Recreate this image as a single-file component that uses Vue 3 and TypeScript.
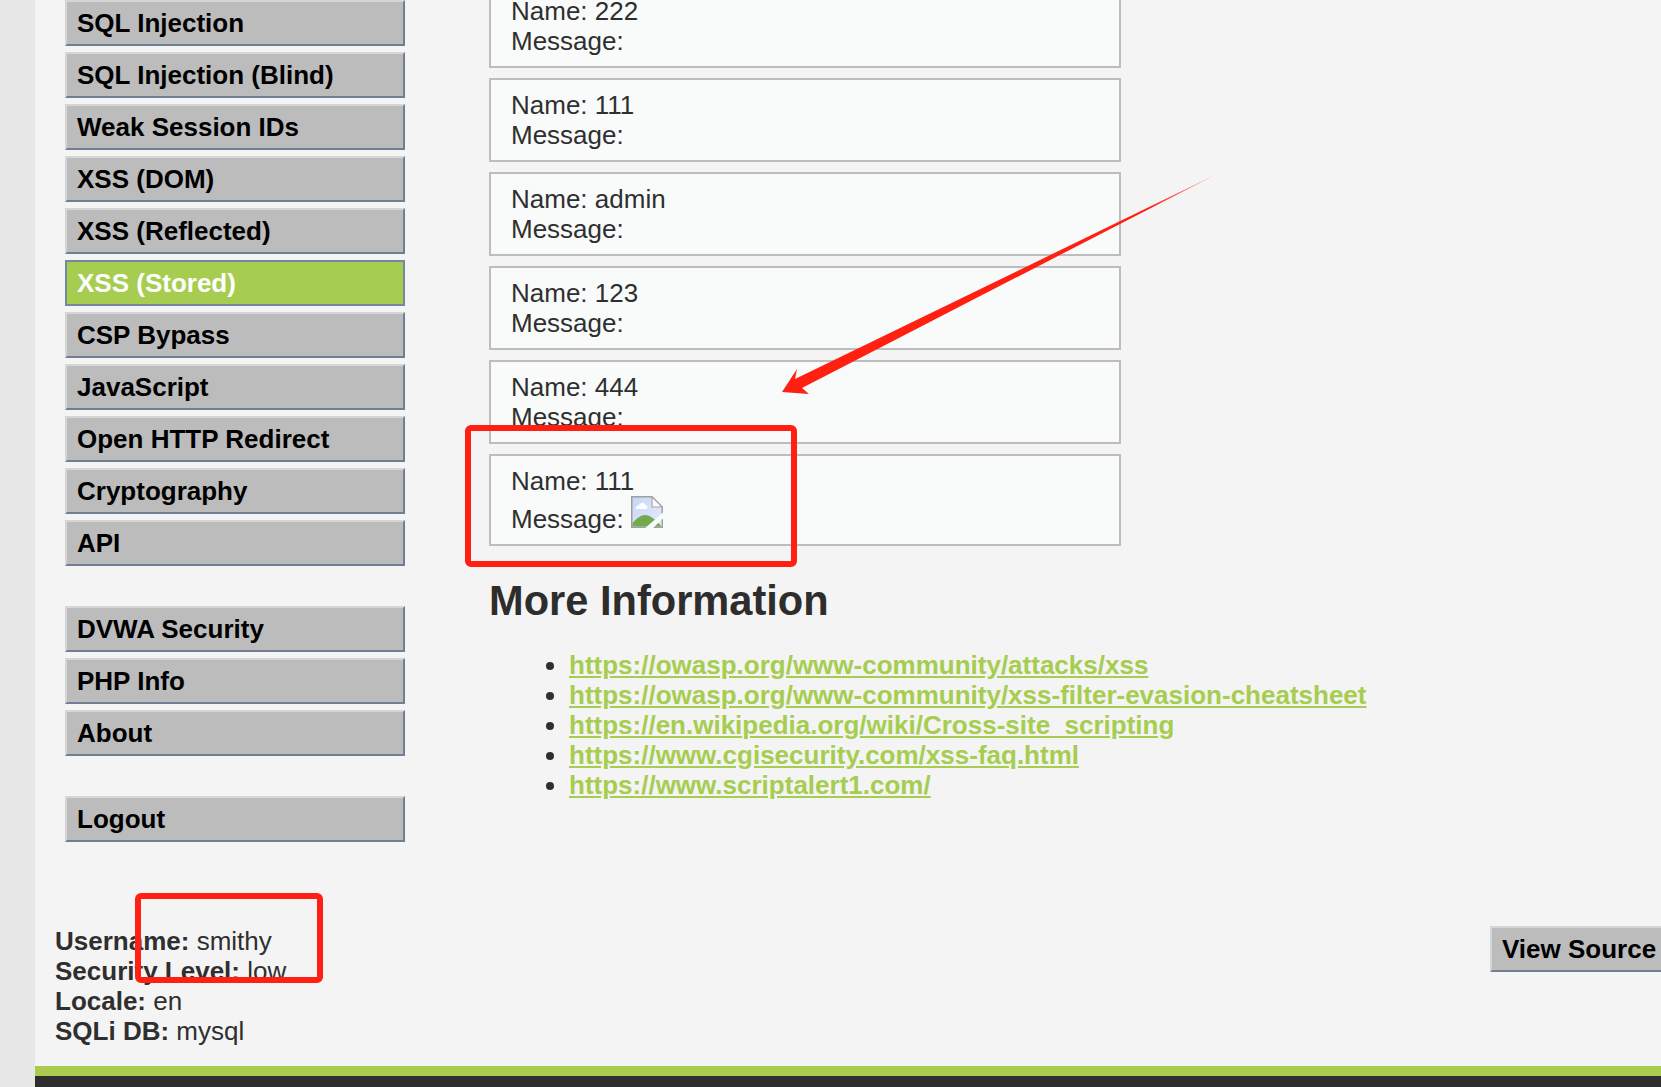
<script setup lang="ts">
const primaryMenu: { label: string; active?: boolean }[] = [
  { label: 'SQL Injection' },
  { label: 'SQL Injection (Blind)' },
  { label: 'Weak Session IDs' },
  { label: 'XSS (DOM)' },
  { label: 'XSS (Reflected)' },
  { label: 'XSS (Stored)', active: true },
  { label: 'CSP Bypass' },
  { label: 'JavaScript' },
  { label: 'Open HTTP Redirect' },
  { label: 'Cryptography' },
  { label: 'API' },
]
const secondaryMenu = ['DVWA Security', 'PHP Info', 'About']
const entries = ['222', '111', 'admin', '123', '444']
const links = [
  'https://owasp.org/www-community/attacks/xss',
  'https://owasp.org/www-community/xss-filter-evasion-cheatsheet',
  'https://en.wikipedia.org/wiki/Cross-site_scripting',
  'https://www.cgisecurity.com/xss-faq.html',
  'https://www.scriptalert1.com/',
]
const info = [
  { key: 'Username:', value: 'smithy' },
  { key: 'Security Level:', value: 'low' },
  { key: 'Locale:', value: 'en' },
  { key: 'SQLi DB:', value: 'mysql' },
]
</script>

<template>
  <div class="page">
    <div class="gutter"></div>
    <div class="main">
      <div class="top">
        <nav class="sidebar">
          <ul class="menu">
            <li v-for="item in primaryMenu" :key="item.label" class="menu-item" :class="{ active: item.active }">
              {{ item.label }}
            </li>
          </ul>
          <ul class="menu">
            <li v-for="item in secondaryMenu" :key="item" class="menu-item">{{ item }}</li>
          </ul>
          <ul class="menu">
            <li class="menu-item">Logout</li>
          </ul>
        </nav>
        <section class="body">
          <div v-for="(name, i) in entries" :key="i" class="entry">
            Name: {{ name }}<br />Message:
          </div>
          <div class="entry entry-image">
            Name: 111<br />Message:
            <svg class="broken" width="32" height="32" viewBox="0 0 32 32">
              <defs>
                <linearGradient id="sky" x1="0" y1="0" x2="1" y2="1">
                  <stop offset="0" stop-color="#c5d6f5" />
                  <stop offset="1" stop-color="#e6edfa" />
                </linearGradient>
              </defs>
              <path d="M0.75 0.75H21L31.25 11V31.25H0.75Z" fill="url(#sky)" stroke="#a0a0a0" stroke-width="1.5" />
              <path d="M21 0.75V11H31.25Z" fill="#fafafa" stroke="#a8a8a8" stroke-width="1.2" />
              <path d="M5 13C4.5 10.5 6.5 9.5 8 9.5C8.5 6.5 13 5.5 14.5 9C16.5 9 17 13 15.5 13Z" fill="#ffffff" />
              <path d="M1.5 30.5V27C6 22 10 19 14 19C19 19 24 23 30.5 30.5Z" fill="#74a950" />
              <path d="M13 33L32 16.5V22.5L21 33Z" fill="#f9fbfb" />
            </svg>
          </div>
          <h2 class="heading">More Information</h2>
          <ul class="links">
            <li v-for="url in links" :key="url"><a class="link" :href="url">{{ url }}</a></li>
          </ul>
        </section>
      </div>
      <div class="bottom">
        <div class="info">
          <div v-for="row in info" :key="row.key"><b>{{ row.key }}</b> {{ row.value }}</div>
        </div>
        <div class="source">View Source</div>
      </div>
      <div class="footer-accent"></div>
      <div class="footer-dark"></div>
    </div>

    <svg class="annotations" width="1661" height="1087" viewBox="0 0 1661 1087">
      <defs>
        <linearGradient id="fade" gradientUnits="userSpaceOnUse" x1="1217" y1="174" x2="1150" y2="209">
          <stop offset="0" stop-color="#ff2012" stop-opacity="0.4" />
          <stop offset="1" stop-color="#ff2012" />
        </linearGradient>
      </defs>
      <path d="M1217 174L802 388L809 394L782 392L797 369L795 379Z" fill="url(#fade)" />
      <rect x="468" y="428" width="326" height="136" rx="3" fill="none" stroke="#ff2012" stroke-width="6" />
      <rect x="138" y="896" width="182" height="84" rx="3" fill="none" stroke="#ff2012" stroke-width="6" />
    </svg>
  </div>
</template>

<style>
html, body { margin: 0; overflow: hidden; }
</style>

<style scoped>
.page {
  position: relative;
  display: flex;
  width: 1661px;
  height: 1087px;
  overflow: hidden;
  background: #f4f4f4;
  color: #2f2f2f;
  font-family: "Liberation Sans", Arial, sans-serif;
  font-size: 26px;
}
.gutter { width: 35px; flex: none; background: #e7e7e7; }
.main { flex: 1; min-width: 0; display: flex; flex-direction: column; }
.top { height: 926px; flex: none; display: flex; }
.sidebar { width: 340px; flex: none; margin-left: 30px; }
.menu { list-style: none; margin: 0 0 40px; padding: 0; }
.menu-item {
  box-sizing: border-box;
  height: 46px;
  margin-bottom: 6px;
  padding-left: 10px;
  line-height: 42px;
  font-weight: 700;
  color: #000;
  background: #bcbcbc;
  border: 2px solid;
  border-color: #d6d6d6 #727e94 #727e94 #d6d6d6;
}
.menu-item.active {
  color: #fff;
  background: #a6cd50;
  border-color: #7488a6;
}
.body { width: 632px; flex: none; margin-left: 84px; margin-top: -16px; }
.entry {
  box-sizing: border-box;
  margin-bottom: 10px;
  padding: 10px 20px;
  line-height: 30px;
  background: #f9fbfb;
  border: 2px solid #bdbdbd;
}
.entry-image { padding-bottom: 9.5px; }
.broken { vertical-align: baseline; }
.heading { margin: 31.5px 0 25.5px; font-size: 41.6px; line-height: 47px; font-weight: 700; color: #2d2d2d; }
.links { margin: 0; padding-left: 80px; line-height: 30px; width: 1000px; }
.link { color: #a6cd50; font-weight: 700; }
.bottom { height: 140px; flex: none; display: flex; justify-content: space-between; align-items: flex-start; padding-left: 20px; }
.info { line-height: 30px; }
.source {
  box-sizing: border-box;
  flex: none;
  width: 200px;
  height: 46px;
  margin-right: -29px;
  padding-left: 10px;
  line-height: 42px;
  font-weight: 700;
  color: #000;
  background: #bcbcbc;
  border: 2px solid;
  border-color: #d6d6d6 #727e94 #727e94 #d6d6d6;
}
.footer-accent { height: 10px; flex: none; background: #aacb4f; }
.footer-dark { flex: 1; background: #2e2e2e; }
.annotations { position: absolute; left: 0; top: 0; pointer-events: none; }
</style>
